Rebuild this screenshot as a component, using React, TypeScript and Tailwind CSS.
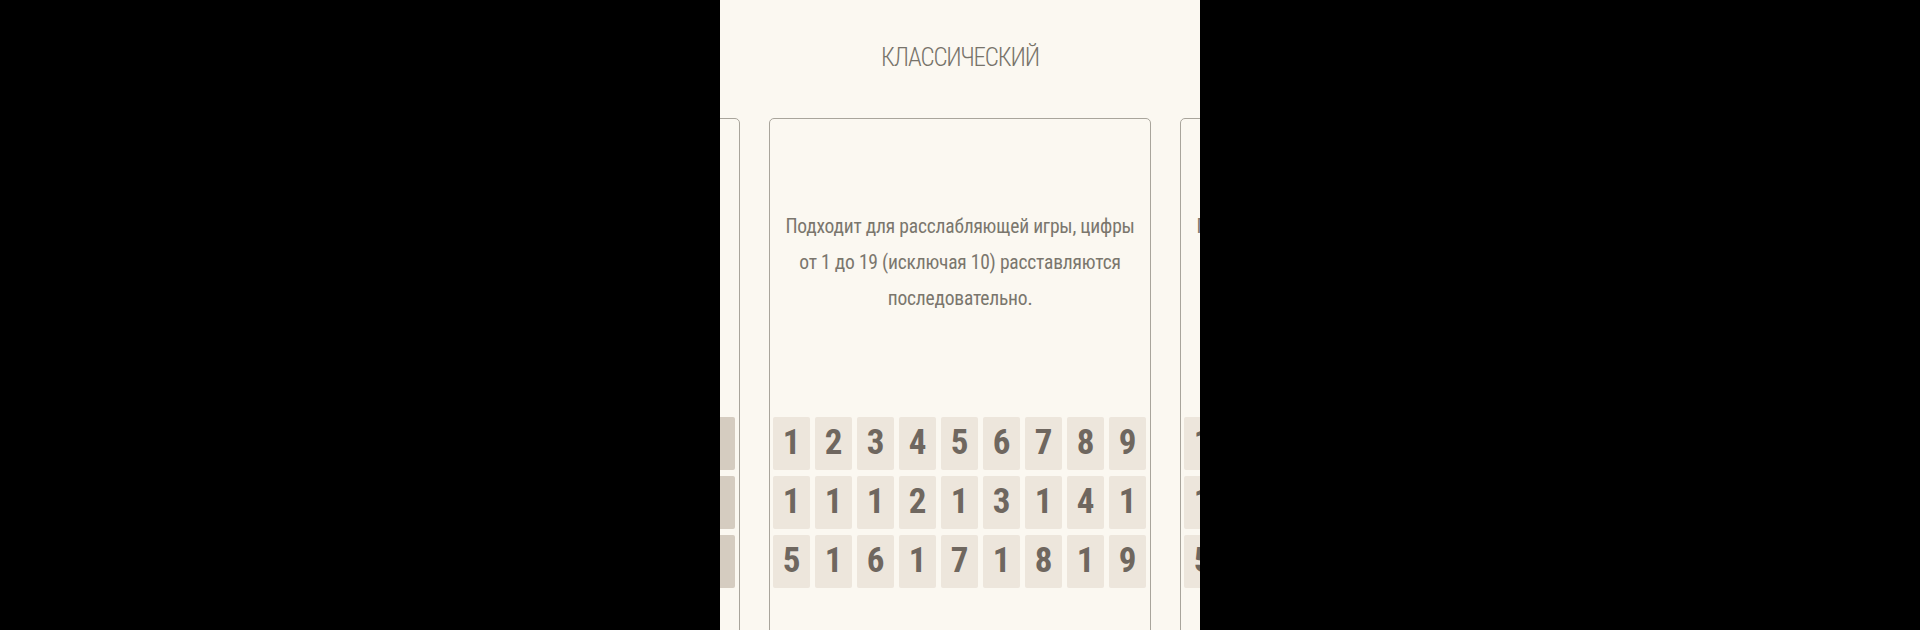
import React from "react";

const COND = '"Roboto Condensed", "Liberation Sans Narrow", "DejaVu Sans Condensed", "Arial Narrow", sans-serif';

const rows = [
  ["1", "2", "3", "4", "5", "6", "7", "8", "9"],
  ["1", "1", "1", "2", "1", "3", "1", "4", "1"],
  ["5", "1", "6", "1", "7", "1", "8", "1", "9"],
];

function Tiles({ dark }: { dark?: boolean }) {
  return (
    <div className="flex flex-col gap-[6px]">
      {rows.map((r, i) => (
        <div key={i} className="flex gap-[5px]">
          {r.map((d, j) => (
            <div
              key={j}
              className={
                dark
                  ? "w-[37px] h-[53px] rounded-[2px] bg-[#d5ccc0] flex items-center justify-center text-[35px] font-bold text-[#d5ccc0]"
                  : "w-[37px] h-[53px] rounded-[2px] bg-[#ede6dc] flex items-center justify-center text-[35px] font-bold text-[#6f675f]"
              }
              style={{ fontFamily: COND }}
            >
              {d}
            </div>
          ))}
        </div>
      ))}
    </div>
  );
}

function Card({ text, dark }: { text: string; dark?: boolean }) {
  return (
    <div className="w-[382px] h-[560px] shrink-0 border-[1.5px] border-[#a9a59c] rounded-[5px] flex flex-col px-[3px]">
      <div className="h-[298px] shrink-0 flex items-center justify-center px-[2px]">
        <p
          className="text-center text-[19.5px] font-normal leading-[36px] text-[#7a766d] mt-[-10px] tracking-[-0.2px]"
          style={{ fontFamily: COND }}
        >
          {text}
        </p>
      </div>
      <Tiles dark={dark} />
    </div>
  );
}

export default function App() {
  return (
    <div className="w-full h-[630px] bg-black flex justify-center overflow-hidden">
      <div className="w-[480px] h-full bg-[#fbf8f1] overflow-hidden flex flex-col">
        <div className="h-[118px] shrink-0 flex items-start justify-center pt-[40px]">
          <h1
            className="text-[25px] font-light leading-[36px] text-[#77736a] tracking-[-1.2px]"
            style={{ fontFamily: COND }}
          >
            КЛАССИЧЕСКИЙ
          </h1>
        </div>
        <div className="flex justify-center gap-[29px] shrink-0">
          <Card text="" dark />
          <Card text="Подходит для расслабляющей игры, цифры от 1 до 19 (исключая 10) расставляются последовательно." />
          <Card text="Подходит для расслабляющей игры, цифры от 1 до 19 (исключая 10) расставляются в случайном порядке." />
        </div>
      </div>
    </div>
  );
}
